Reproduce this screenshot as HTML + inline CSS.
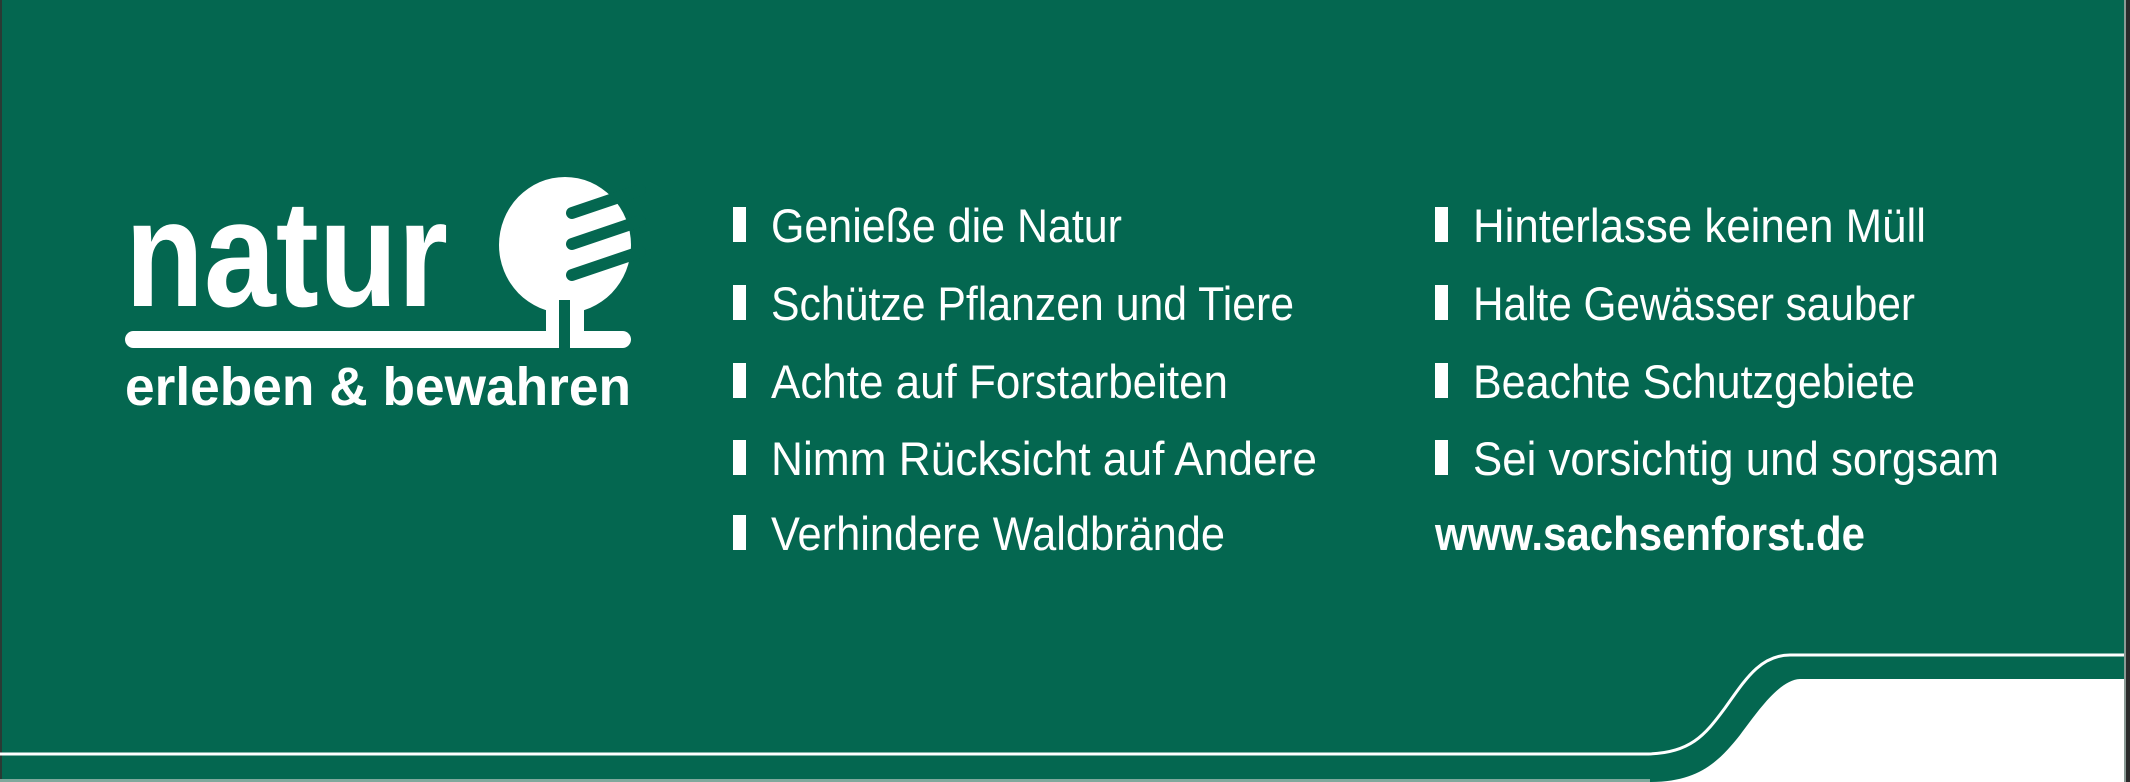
<!DOCTYPE html>
<html><head><meta charset="utf-8"><style>
html,body{margin:0;padding:0;background:#046750;}
svg{display:block}
</style></head><body>
<svg width="2130" height="782" viewBox="0 0 2130 782" xmlns="http://www.w3.org/2000/svg">
<rect width="2130" height="782" fill="#046750"/>
<rect x="0" y="0" width="2" height="782" fill="#2a3a34"/>
<rect x="2126" y="0" width="4" height="782" fill="#2a2a2a"/>
<rect x="2124" y="0" width="2" height="782" fill="#8a9a94"/>
<!-- logo -->
<g fill="#fff">
<text x="125" y="306" font-family="Liberation Sans, sans-serif" font-weight="bold" font-size="152" textLength="323" lengthAdjust="spacingAndGlyphs">natur</text>
<ellipse cx="565" cy="245" rx="66" ry="68"/>
<rect x="125" y="331" width="506" height="17" rx="8.5"/>
<rect x="546" y="300" width="38" height="40"/>
<text x="125" y="405" font-family="Liberation Sans, sans-serif" font-weight="bold" font-size="54" textLength="506" lengthAdjust="spacingAndGlyphs">erleben &amp; bewahren</text>
</g>
<rect x="559" y="300" width="11" height="48" fill="#046750"/>
<g stroke="#046750" stroke-width="12" stroke-linecap="round">
<line x1="572" y1="213" x2="640" y2="190"/>
<line x1="572" y1="244" x2="640" y2="221"/>
<line x1="572" y1="275" x2="640" y2="252"/>
</g>
<!-- col 1 -->
<g fill="#fff" font-family="Liberation Sans, sans-serif" font-size="47">
<rect x="733" y="207" width="13" height="35"/>
<text x="771" y="242" textLength="351" lengthAdjust="spacingAndGlyphs">Genieße die Natur</text>
<rect x="733" y="285" width="13" height="35"/>
<text x="771" y="320" textLength="523" lengthAdjust="spacingAndGlyphs">Schütze Pflanzen und Tiere</text>
<rect x="733" y="363" width="13" height="35"/>
<text x="771" y="398" textLength="457" lengthAdjust="spacingAndGlyphs">Achte auf Forstarbeiten</text>
<rect x="733" y="440" width="13" height="35"/>
<text x="771" y="475" textLength="546" lengthAdjust="spacingAndGlyphs">Nimm Rücksicht auf Andere</text>
<rect x="733" y="515" width="13" height="35"/>
<text x="771" y="550" textLength="454" lengthAdjust="spacingAndGlyphs">Verhindere Waldbrände</text>
<!-- col 2 -->
<rect x="1435" y="207" width="13" height="35"/>
<text x="1473" y="242" textLength="453" lengthAdjust="spacingAndGlyphs">Hinterlasse keinen Müll</text>
<rect x="1435" y="285" width="13" height="35"/>
<text x="1473" y="320" textLength="442" lengthAdjust="spacingAndGlyphs">Halte Gewässer sauber</text>
<rect x="1435" y="363" width="13" height="35"/>
<text x="1473" y="398" textLength="442" lengthAdjust="spacingAndGlyphs">Beachte Schutzgebiete</text>
<rect x="1435" y="440" width="13" height="35"/>
<text x="1473" y="475" textLength="526" lengthAdjust="spacingAndGlyphs">Sei vorsichtig und sorgsam</text>
<text x="1435" y="550" font-weight="bold" textLength="430" lengthAdjust="spacingAndGlyphs">www.sachsenforst.de</text>
</g>
<!-- bottom swoosh -->
<path d="M1650 782 C1700 782 1720 760 1740 735 C1760 708 1780 680 1800 679 L2124 679 L2124 782 Z" fill="#fff"/>
<path d="M0 754 L1645 754 C1690 754 1705 735 1725 708 C1745 680 1760 655 1790 655 L2124 655" fill="none" stroke="#fff" stroke-width="3"/>
<rect x="0" y="779" width="1650" height="3" fill="#7fa89c"/>
</svg>
</body></html>
